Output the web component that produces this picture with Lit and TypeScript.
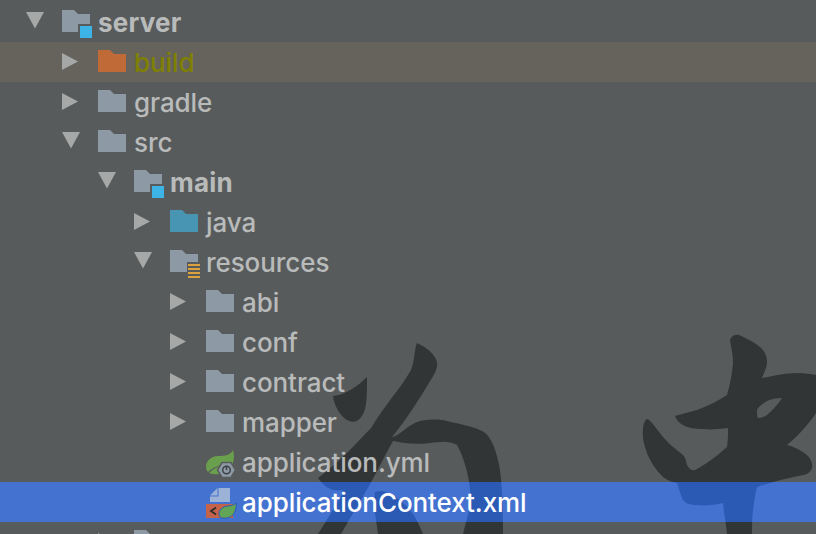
import { LitElement, html, css, svg } from 'lit';
import { customElement } from 'lit/decorators.js';

type Kind = 'module' | 'folder' | 'excluded' | 'source' | 'res' | 'yml' | 'xml';
interface Row {
  name: string;
  depth: number;
  arrow?: 'open' | 'closed';
  icon: Kind;
  cls?: string;
}

const ROWS: Row[] = [
  { name: 'server', depth: 0, arrow: 'open', icon: 'module', cls: 'bold' },
  { name: 'build', depth: 1, arrow: 'closed', icon: 'excluded', cls: 'ignored' },
  { name: 'gradle', depth: 1, arrow: 'closed', icon: 'folder' },
  { name: 'src', depth: 1, arrow: 'open', icon: 'folder' },
  { name: 'main', depth: 2, arrow: 'open', icon: 'module', cls: 'bold' },
  { name: 'java', depth: 3, arrow: 'closed', icon: 'source' },
  { name: 'resources', depth: 3, arrow: 'open', icon: 'res' },
  { name: 'abi', depth: 4, arrow: 'closed', icon: 'folder' },
  { name: 'conf', depth: 4, arrow: 'closed', icon: 'folder' },
  { name: 'contract', depth: 4, arrow: 'closed', icon: 'folder' },
  { name: 'mapper', depth: 4, arrow: 'closed', icon: 'folder' },
  { name: 'application.yml', depth: 4, icon: 'yml' },
  { name: 'applicationContext.xml', depth: 4, icon: 'xml', cls: 'selected' },
  { name: '', depth: 2, arrow: 'closed', icon: 'folder' },
];

const folderPath = 'M0 0H12L16 4H28V22H0Z';

// wallpaper calligraphy, page coordinates
const inkPaths = svg`
  <path d="M367 377C367 392 367 405 364 412C360 421 355 423 349 421C340 417 334 405 333 396C345 395 358 386 367 377Z"/>
  <path d="M417 343C426 347 435 354 437 362C438 368 435 373 432 378C420 398 406 420 392 437C400 436 408 424 420 421C430 419 440 419 447 421C460 424 475 427 484 432C492 438 497 452 500 470C503 495 503 515 503 534H463C468 515 471 505 470 490C469 475 463 455 457 445C448 440 440 442 430 443C415 445 403 443 393 441C385 455 378 470 369 486C360 502 350 518 341 534H318C323 526 330 515 337 503C341 497 344 492 342 490C333 492 325 488 318 478C335 466 355 445 371 428C385 405 403 385 411 370C415 360 414 350 417 343Z"/>
  <path d="M375 492C380 490 384 491 388 493C397 497 403 502 408 508C413 513 417 520 419 525L423 534H378C377 527 376 520 375 513C374 505 374 498 375 492Z"/>
  <path fill-rule="evenodd" d="M730 340C731 336 735 334 739 335C748 339 758 344 763 350C767 355 768 362 766 368L762 378C773 376 785 373 797 373C805 373 811 374 816 375V413C808 425 797 437 787 445C795 447 802 451 807 455C811 459 813 464 812 468C810 473 806 475 803 475C788 478 772 482 757 487C755 495 754 503 753 510C752 518 752 526 752 534H727C726 524 724 513 723 503C714 505 705 506 697 505C690 505 685 503 683 500C680 494 679 488 677 483C671 482 667 480 663 477C656 470 650 461 647 453C644 445 642 437 643 430C643 424 645 420 647 419C650 419 655 427 663 437C670 445 677 450 683 455C686 458 686 462 687 465C689 469 692 471 695 470C705 465 717 456 727 447C728 441 728 434 728 428C719 429 711 430 703 429C695 429 688 428 683 425C679 423 676 419 675 416C682 414 690 412 697 410C708 406 718 401 727 395C730 385 732 374 733 363C733 354 731 347 730 340ZM782 398C776 398 771 399 767 401C762 404 758 407 757 410C757 413 757 417 758 418C761 418 764 417 767 415C772 411 778 404 782 398Z"/>
`;

@customElement('app-root')
export class AppRoot extends LitElement {
  static styles = css`
    :host {
      display: block;
      position: relative;
      width: 816px;
      height: 534px;
      overflow: hidden;
      background: #585b5c;
      font-family: Inter, 'Noto Sans', sans-serif;
    }
    .ink {
      position: absolute;
      left: 0;
      top: 0;
      width: 816px;
      height: 534px;
      fill: #323536;
    }
    .tree {
      position: relative;
      display: flex;
      flex-direction: column;
      padding-top: 2px;
    }
    .row {
      position: relative;
      flex: none;
      height: 40px;
      display: flex;
      align-items: center;
      padding-left: 26px;
      font-size: 26px;
      font-weight: 500;
      letter-spacing: -0.08px;
      color: #b9bbbb;
      white-space: nowrap;
      overflow: hidden;
    }
    .row.ignored {
      background: #65635b;
      color: #808000;
    }
    .row.bold {
      font-weight: 700;
      letter-spacing: 0.22px;
    }
    .row.selected {
      background: #4472d0;
      color: #fff;
    }
    .row.selected .ink {
      top: -482px;
      fill: #2b5ab5;
    }
    .indent {
      flex: none;
    }
    .arrow,
    .icon {
      position: relative;
      flex: none;
      width: 36px;
      height: 40px;
    }
    .arrow svg,
    .icon svg {
      position: absolute;
      left: 0;
      top: 0;
    }
    .label {
      position: relative;
      margin-top: 1px;
    }
  `;

  private arrow(kind?: 'open' | 'closed') {
    if (!kind) return html`<span class="arrow"></span>`;
    return html`<span class="arrow">
      <svg width="36" height="40" fill="#a6a8a8">
        ${kind === 'open'
          ? svg`<path d="M0 10H18L9 26.500Z"/>`
          : svg`<path d="M0 11L16 19.500L0 28Z"/>`}
      </svg>
    </span>`;
  }

  private icon(kind: Kind) {
    let body;
    switch (kind) {
      case 'module':
        body = svg`
          <path d=${folderPath} transform="translate(0 8)" fill="#8d9aa5"/>
          <rect x="16" y="22" width="16" height="16" fill="#585b5c"/>
          <rect x="18" y="24" width="12" height="12" fill="#3db3e6"/>`;
        break;
      case 'excluded':
        body = svg`<path d=${folderPath} transform="translate(0 8)" fill="#c06a37"/>`;
        break;
      case 'source':
        body = svg`<path d=${folderPath} transform="translate(0 8)" fill="#4795b3"/>`;
        break;
      case 'res':
        body = svg`
          <path d=${folderPath} transform="translate(0 8)" fill="#8d9aa5"/>
          <rect x="17" y="20" width="15" height="18" fill="#585b5c"/>
          <path d="M18 22H30V24H18ZM18 26H30V28H18ZM18 30H30V32H18ZM18 34H30V36H18Z" fill="#dba23d"/>`;
        break;
      case 'yml':
        body = svg`
          <path d="M0 25C0 18 6 14 12 14C19 14 25 13 27 8C29 15 28 22 23 27C17 33 7 33 3 31C7 27 11 25 16 23C10 24 5 27 2 30C1 29 0 27 0 25Z" fill="#6a9f4d"/>
          <path d="M16 20.500H25L29.500 28L25 35.500H16L11.500 28Z" fill="#8d9aa5" stroke="#585b5c" stroke-width="1.500"/>
          <circle cx="20.500" cy="28" r="3.800" fill="none" stroke="#3f4347" stroke-width="1.500"/>
          <path d="M20.500 23.500V28" stroke="#3f4347" stroke-width="1.500"/>`;
        break;
      case 'xml':
        body = svg`
          <path d="M12.500 6H24V20H4V14.500H12.500Z" fill="#9cb2d6"/>
          <path d="M4 13.500L11.500 6V13.500Z" fill="#9cb2d6"/>
          <rect x="0" y="22" width="27" height="14" fill="#c5634a"/>
          <path d="M10 25.500L5 29L10 32.500" fill="none" stroke="#2d2d2d" stroke-width="1.800"/>
          <path d="M14 35C11 30 15 25 21 24C25 24 28 23 30 21C31 27 28 35 21 36C18 36.500 15 36 14 35Z" fill="#62a556" stroke="#2b5ab5" stroke-width="1"/>`;
        break;
      default:
        body = svg`<path d=${folderPath} transform="translate(0 8)" fill="#8d9aa5"/>`;
    }
    return html`<span class="icon"><svg width="36" height="40">${body}</svg></span>`;
  }

  render() {
    return html`
      <svg class="ink">${inkPaths}</svg>
      <div class="tree">
        ${ROWS.map(
          (row) => html`
            <div class="row ${row.cls ?? ''}">
              ${row.cls === 'selected' ? html`<svg class="ink">${inkPaths}</svg>` : ''}
              <span class="indent" style="width:${row.depth * 36}px"></span>
              ${this.arrow(row.arrow)} ${this.icon(row.icon)}
              <span class="label">${row.name}</span>
            </div>
          `
        )}
      </div>
    `;
  }
}
